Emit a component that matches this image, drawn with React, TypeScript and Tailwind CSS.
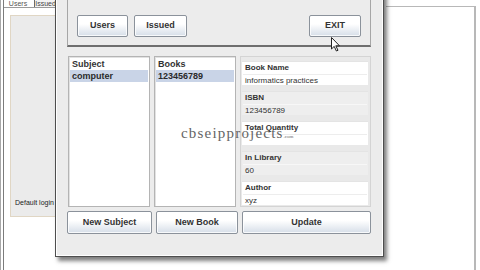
import React from "react"

const sans = { fontFamily: '"Liberation Sans", Arial, sans-serif' }

function Btn({ label, className = "" }: { label: string; className?: string }) {
  return (
    <div
      className={
        "flex items-center justify-center rounded-[2px] border border-[#8b929b] bg-linear-to-b from-white from-40% to-[#d6dee8] text-[9px] font-bold text-[#333] shadow-[inset_0_0_0_1px_rgba(255,255,255,0.8)] " +
        className
      }
    >
      {label}
    </div>
  )
}

function ListBox({ title, selected }: { title: string; selected: string }) {
  return (
    <div className="flex w-[82px] flex-col border border-[#b4b4b4] bg-white shadow-[inset_1px_1px_0_#e2e2e2]">
      <div className="px-[3px] pt-[2px] text-[9px] font-bold leading-[10px] text-[#333]">{title}</div>
      <div className="mx-[1px] mt-[1px] bg-[#c9d4e7] px-[2px] text-[9px] font-bold leading-[12px] text-[#2a2a2a]">
        {selected}
      </div>
    </div>
  )
}

const fields = [
  { label: "Book Name", value: "informatics practices", gray: false },
  { label: "ISBN", value: "123456789", gray: true },
  { label: "Total Quantity", value: "", gray: false },
  { label: "In Library", value: "60", gray: true },
  { label: "Author", value: "xyz", gray: false },
]

function Field({ label, value, gray }: { label: string; value: string; gray: boolean }) {
  return (
    <div
      className={
        "flex h-[24px] flex-col border-t border-[#e4e4e4] " + (gray ? "bg-[#eeeeee]" : "bg-white")
      }
    >
      <div className="px-[3px] pt-[1px] text-[8px] font-bold leading-[10px] text-[#333]">{label}</div>
      <div
        className={
          "mx-[1px] mt-[1px] flex-1 border-t px-[2px] text-[8px] leading-[11px] text-[#333] " +
          (gray ? "border-[#f7f7f7]" : "border-[#ededed]")
        }
      >
        {value}
      </div>
    </div>
  )
}

export default function App() {
  return (
    <div className="relative flex h-[270px] w-[480px] overflow-hidden bg-white" style={sans}>
      {/* back window on the left */}
      <div className="flex h-full w-[62px] border-l border-[#a8a8a8] pl-[2px]">
        <div className="flex h-full flex-1 flex-col border-l border-[#7c7c7c] bg-white">
          <div className="flex h-[8px] items-end overflow-hidden border-b border-[#9a9a9a]">
            <div className="w-[28px] text-center text-[7px] leading-[7px] text-[#555]">Users</div>
            <div className="ml-[2px] h-[8px] w-[23px] border border-b-0 border-[#6a6a6a] bg-[#f4f4f4] text-center text-[7px] leading-[7px] text-[#444]">
              Issued
            </div>
          </div>
          <div className="flex flex-1 flex-col pl-[6px] pt-[7px]">
            <div className="flex h-[202px] flex-col justify-end border border-[#e0d6c4] bg-[#ebebeb] pb-[9px] pl-[4px]">
              <div className="whitespace-nowrap text-[7px] leading-[8px] text-[#222]">Default login id : admin</div>
            </div>
          </div>
        </div>
      </div>

      {/* back window on the right */}
      <div className="ml-auto mr-[4px] mt-[6px] w-[90px] border-r-2 border-t border-[#b8b8b8] bg-white" />

      {/* dialog */}
      <div className="absolute left-[55px] top-[-12px] flex h-[269px] w-[329px] border border-[#4e4e4e] bg-[#ececec] shadow-[3px_4px_4px_rgba(0,0,0,0.5)]">
        <div className="flex flex-1 flex-col border border-white pl-[10px] pr-[11px]">
          <div className="mt-[2px] flex h-[55px] items-end justify-between border border-b-2 border-[#a6a6a6] border-b-[#6e6e6e] px-[9px] pb-[8px]">
            <div className="flex gap-[6px]">
              <Btn label="Users" className="h-[22px] w-[51px]" />
              <Btn label="Issued" className="h-[22px] w-[53px]" />
            </div>
            <Btn label="EXIT" className="h-[22px] w-[52px]" />
          </div>

          <div className="mt-[9px] flex h-[151px] gap-[4px] pl-[1px]">
            <ListBox title="Subject" selected="computer" />
            <ListBox title="Books" selected="123456789" />
            <div className="flex w-[131px] flex-col gap-[6px] border border-[#d4d4d4] bg-[#e9e9e9] pb-[1px] pl-[1px] pr-[2px] pt-[4px]">
              {fields.map((f) => (
                <Field key={f.label} {...f} />
              ))}
            </div>
          </div>

          <div className="mt-[4px] flex h-[23px] gap-[4px]">
            <Btn label="New Subject" className="w-[85px]" />
            <Btn label="New Book" className="w-[82px]" />
            <Btn label="Update" className="w-[129px]" />
          </div>
        </div>
      </div>

      {/* watermark */}
      <div
        className="absolute left-[181px] top-[126px] flex items-baseline whitespace-nowrap text-[15px] leading-[15px] tracking-[1.2px] text-[#4a4a4a] opacity-85"
        style={{ fontFamily: '"Liberation Serif", "Times New Roman", serif' }}
      >
        cbseipprojects<span className="text-[5px] leading-[5px] tracking-normal">.com</span>
      </div>

      {/* mouse pointer */}
      <svg className="absolute left-[331px] top-[37px]" width="10" height="15" viewBox="0 0 10 15">
        <path d="M0.5 0.5 L0.5 12 L3.2 9.4 L5.4 14 L7 13.3 L4.8 8.8 L8.5 8.8 Z" fill="white" stroke="#222" strokeWidth="1" />
      </svg>
    </div>
  )
}
